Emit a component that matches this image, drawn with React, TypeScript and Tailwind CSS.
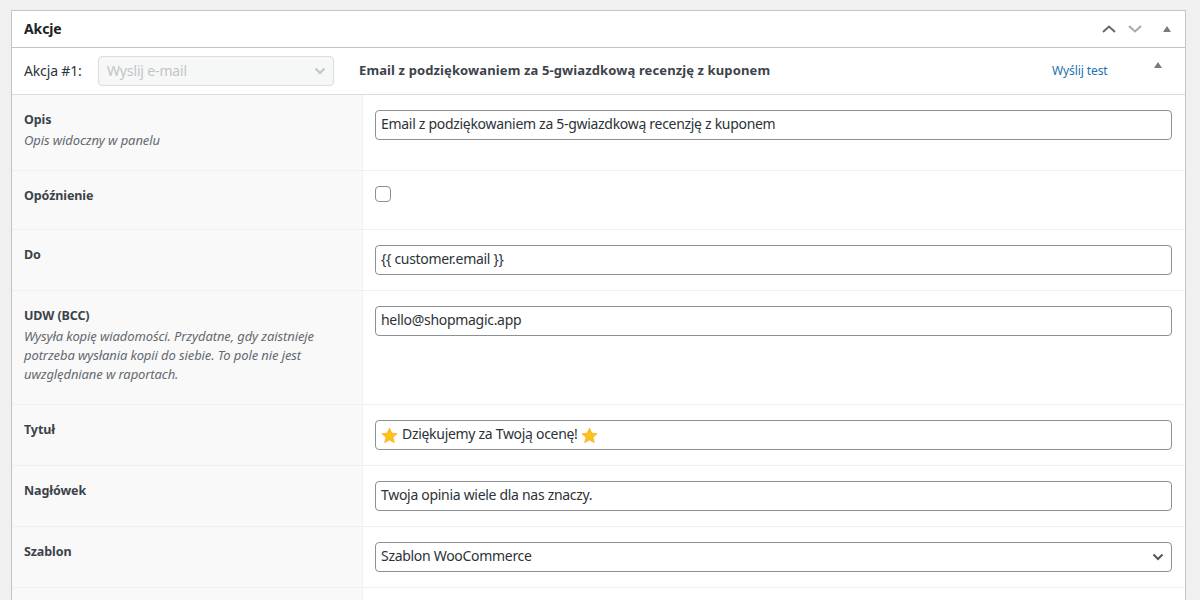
import React from "react";

const font = { fontFamily: '"Noto Sans", sans-serif' };

function Chevron({ className }: { className?: string }) {
  return (
    <svg className={className} width="16" height="16" viewBox="0 0 16 16" fill="none" stroke="currentColor" strokeWidth="2">
      <path d="M2 11 L8 5.5 L14 11" />
    </svg>
  );
}

function Tri({ className }: { className?: string }) {
  return (
    <svg className={className} width="8" height="6" viewBox="0 0 8 6" fill="#787c82">
      <path d="M4 0 L8 6 L0 6 Z" />
    </svg>
  );
}

function Down({ className }: { className?: string }) {
  return (
    <svg className={className} width="12" height="8" viewBox="0 0 12 8" fill="none" stroke="currentColor" strokeWidth="2">
      <path d="M1.5 1.5 L6 6 L10.5 1.5" />
    </svg>
  );
}

function Row({ label, desc, h, children }: { label: string; desc?: React.ReactNode; h: string; children: React.ReactNode }) {
  return (
    <div className={`flex border-b border-[#f0f0f1] ${h}`}>
      <div className="w-[351px] shrink-0 bg-[#f9f9f9] border-r border-[#f0f0f1] pl-3 pr-3 pt-[15px]">
        <div className="text-[12.5px] leading-[20px] font-bold text-[#3c434a] tracking-[-0.1px]">{label}</div>
        {desc && <div className="mt-[1px] text-[13px] leading-[19px] italic text-[#646970] tracking-[-0.1px]">{desc}</div>}
      </div>
      <div className="flex-1 pl-3 pr-3 pt-[15px]">{children}</div>
    </div>
  );
}

function Field({ children, select }: { children: React.ReactNode; select?: boolean }) {
  return (
    <div className="h-[30px] w-[797px] rounded border border-[#8c8f94] bg-white pl-[5px] pr-[7px] flex items-center justify-between text-[14px] text-[#2c3338]">
      <span className="flex items-center tracking-[-0.3px] pb-[4px]">{children}</span>
      {select && <Down className="text-[#50575e]" />}
    </div>
  );
}

function Star() {
  return (
    <svg width="17" height="17" viewBox="0 0 24 24" className="shrink-0 mt-[4px]">
      <path d="M12 1.5 L15.2 8.6 L22.9 9.4 L17.1 14.6 L18.8 22.2 L12 18.3 L5.2 22.2 L6.9 14.6 L1.1 9.4 L8.8 8.6 Z" fill="#fcc21b" stroke="#f5a623" strokeWidth="0.8" />
    </svg>
  );
}

export default function App() {
  return (
    <div style={font} className="h-[600px] overflow-hidden bg-[#f0f0f1] pt-[10px] pl-[11px] pr-[14px]">
      <div className="border border-[#c3c4c7] bg-white">
        <div className="h-[37px] border-b border-[#c3c4c7] flex items-center pl-3 pr-[14px]">
          <h2 className="text-[14px] font-bold text-[#1d2327] flex-1 tracking-[-0.1px] pb-[2px]">Akcje</h2>
          <Chevron className="text-[#646970]" />
          <Chevron className="text-[#a7aaad] ml-[10px] rotate-180" />
          <Tri className="ml-[20px]" />
        </div>
        <div className="h-[47px] border-b border-[#dcdcde] flex items-center pl-3">
          <span className="text-[14px] text-[#2c3338] w-[74px] tracking-[-0.15px] pb-[2px]">Akcja #1:</span>
          <div className="w-[236px] h-[30px] rounded border border-[#dcdcde] bg-[#f6f7f7] flex items-center justify-between pl-2 pr-[7px] text-[14px] text-[#c3c4c7]">
            <span className="tracking-[-0.15px] pb-[2px]">Wyslij e-mail</span>
            <Down className="text-[#c3c4c7]" />
          </div>
          <span className="ml-[25px] text-[13px] font-bold text-[#3c434a] w-[693px] tracking-[0.12px]">Email z podziękowaniem za 5-gwiazdkową recenzję z kuponem</span>
          <span className="text-[12px] text-[#2271b1] w-[102px] tracking-[-0.1px]">Wyślij test</span>
          <Tri className="-mt-[13px]" />
        </div>
        <Row label="Opis" h="h-[76px]" desc="Opis widoczny w panelu">
          <Field>Email z podziękowaniem za 5-gwiazdkową recenzję z kuponem</Field>
        </Row>
        <Row label="Opóźnienie" h="h-[59px]">
          <div className="w-4 h-4 rounded border border-[#8c8f94] bg-white" />
        </Row>
        <Row label="Do" h="h-[61px]">
          <Field>{"{{ customer.email }}"}</Field>
        </Row>
        <Row label="UDW (BCC)" h="h-[114px]" desc="Wysyła kopię wiadomości. Przydatne, gdy zaistnieje potrzeba wysłania kopii do siebie. To pole nie jest uwzględniane w raportach.">
          <Field>hello@shopmagic.app</Field>
        </Row>
        <Row label="Tytuł" h="h-[61px]">
          <Field><Star /><span className="ml-[4px] mr-[3px]">Dziękujemy za Twoją ocenę!</span><Star /></Field>
        </Row>
        <Row label="Nagłówek" h="h-[61px]">
          <Field>Twoja opinia wiele dla nas znaczy.</Field>
        </Row>
        <Row label="Szablon" h="h-[61px]">
          <Field select>Szablon WooCommerce</Field>
        </Row>
        <Row label="" h="h-[40px]"><div /></Row>
      </div>
    </div>
  );
}
